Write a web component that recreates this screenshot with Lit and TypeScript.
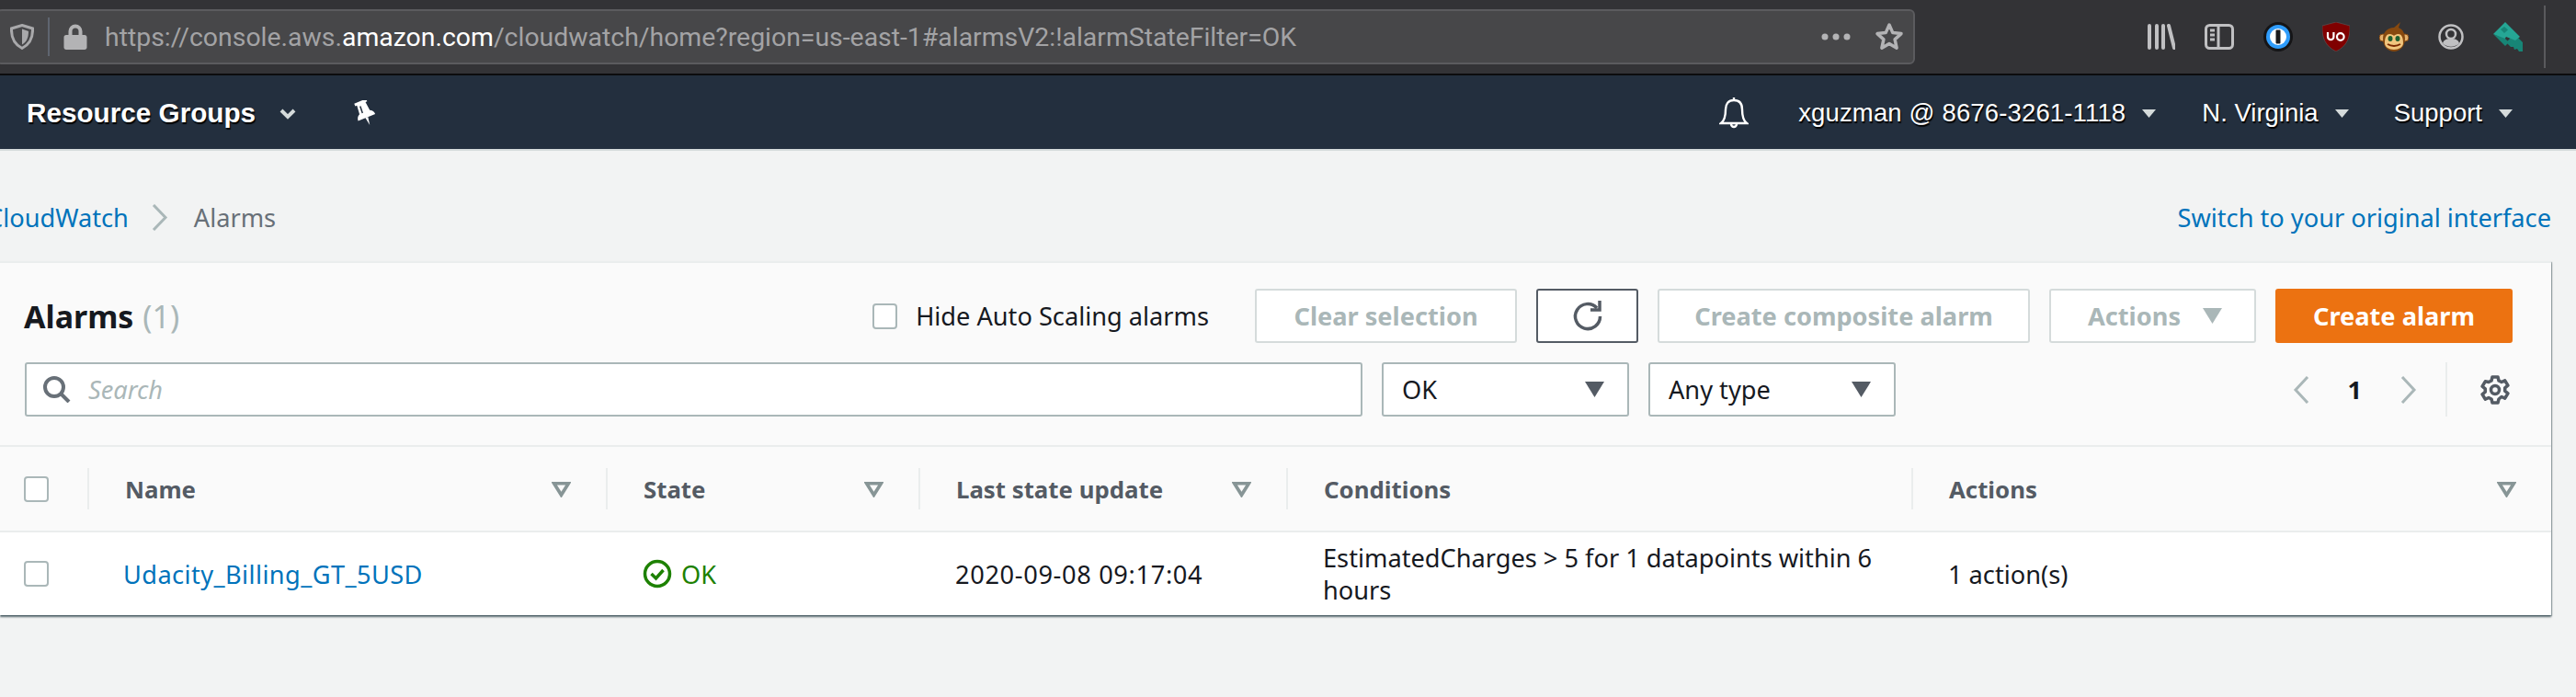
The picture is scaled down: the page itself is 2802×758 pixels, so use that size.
import { LitElement, css, html } from "lit";
import { customElement } from "lit/decorators.js";

const caret = html`<svg class="caret" viewBox="0 0 20 16"><path d="M0 0h20L10 16z" /></svg>`;
const sort = html`<svg class="sort" viewBox="0 0 20 16"><path d="M2.500 1.500h15L10 13.500z" fill="none" stroke="#879596" stroke-width="3.500" /></svg>`;
const mini = html`<svg class="mini" viewBox="0 0 15 9"><path d="M0 0h15L7.500 9z" /></svg>`;

const columns = [
  { name: "Name", sorted: true },
  { name: "State", sorted: true },
  { name: "Last state update", sorted: true },
  { name: "Conditions", sorted: false },
  { name: "Actions", sorted: true },
];

@customElement("app-root")
export class AppRoot extends LitElement {
  static styles = css`
    :host {
      display: block;
      width: 2802px;
      height: 758px;
      overflow: hidden;
      background: #f2f3f3;
      font-family: "Noto Sans", Lato, sans-serif;
      font-size: 27.2px;
      color: #16191f;
    }
    svg {
      display: block;
      flex: none;
    }

    /* browser chrome */
    .chrome {
      height: 80px;
      background: #333336;
      display: flex;
      align-items: center;
      border-bottom: 2px solid #0c0c0d;
    }
    .url {
      width: 2087px;
      height: 60px;
      margin-left: -4px;
      box-sizing: border-box;
      background: #474749;
      border: 2px solid #5b5b5e;
      border-radius: 6px;
      display: flex;
      align-items: center;
      padding-left: 13px;
      font-family: Roboto, sans-serif;
      font-size: 28.4px;
      color: #a3a3a5;
      white-space: nowrap;
    }
    .url b {
      font-weight: 400;
      color: #fff;
    }
    .url .sep {
      width: 2px;
      height: 42px;
      background: #5f6570;
      margin: 0 15px 0 15px;
    }
    .url .addr {
      margin-left: 19px;
      flex: 1;
    }
    .url .dots {
      margin-right: 26px;
    }
    .url .star {
      margin-right: 10px;
    }
    .tools {
      display: flex;
      align-items: center;
      margin-left: 253px;
      gap: 32px;
    }
    .tools .end {
      width: 2px;
      height: 68px;
      background: #5a5a5d;
      margin-left: -9px;
    }

    /* aws nav */
    .nav {
      height: 82px;
      box-sizing: border-box;
      background: #232f3e;
      border-bottom: 2px solid #d5dbdb;
      display: flex;
      align-items: center;
      padding: 2px 69px 0 29px;
      color: #fff;
      font-family: "Liberation Sans", Arial, sans-serif;
      font-size: 27.5px;
      white-space: nowrap;
      text-shadow: 1px 2px 1px #000;
    }
    .nav .groups {
      font-weight: 700;
      font-size: 29.7px;
    }
    .nav .chev {
      margin: 2px 0 0 26px;
    }
    .nav .pin {
      margin-left: 63px;
    }
    .nav .bell {
      margin-left: auto;
    }
    .nav .user {
      margin-left: 54px;
      letter-spacing: 0.15px;
    }
    .nav .region {
      margin-left: 50px;
    }
    .nav .support {
      margin-left: 49px;
    }
    .nav .mini {
      margin-left: 18px;
      width: 15px;
      height: 9px;
      fill: #d5dbdb;
    }

    /* breadcrumb */
    .crumbs {
      height: 96px;
      padding-top: 24px;
      display: flex;
      align-items: center;
      margin-left: -14px;
      width: 2789px;
      white-space: nowrap;
    }
    .crumbs a,
    .link {
      color: #0073bb;
    }
    .crumbs svg {
      margin: 0 28px 0 25px;
    }
    .crumbs span {
      color: #687078;
    }
    .crumbs .switch {
      margin-left: auto;
    }

    /* panel */
    .panel {
      width: 2775px;
      background: #fff;
      box-shadow: 0 2px 2px rgba(0, 28, 36, 0.6), 1px 1px 1px rgba(0, 28, 36, 0.25);
      border-top: 2px solid #eaeded;
    }
    .top {
      background: #fafafa;
      padding: 28px 42px 31px 26px;
      display: flex;
      flex-direction: column;
      gap: 21px;
      border-bottom: 2px solid #eaeded;
    }
    .row {
      height: 59px;
      display: flex;
      align-items: center;
    }
    .title {
      font-size: 34px;
      font-weight: 700;
      white-space: nowrap;
    }
    .title span {
      font-weight: 400;
      color: #aab7b8;
      margin-left: 1px;
    }
    .box {
      width: 27px;
      height: 28px;
      box-sizing: border-box;
      background: #fff;
      border: 2px solid #aab7b8;
      border-radius: 4px;
      flex: none;
    }
    .hide {
      display: flex;
      align-items: center;
      gap: 20px;
      margin-left: auto;
      margin-right: 50px;
      white-space: nowrap;
    }
    .btn {
      height: 59px;
      box-sizing: border-box;
      border: 2px solid #d5dbdb;
      border-radius: 3px;
      background: #fff;
      color: #aab7b8;
      font-weight: 700;
      display: flex;
      align-items: center;
      justify-content: center;
      white-space: nowrap;
      margin-left: 21px;
    }
    .hide + .btn {
      margin-left: 0;
    }
    .clear {
      width: 285px;
    }
    .refresh {
      width: 111px;
      border-color: #545b64;
    }
    .composite {
      width: 405px;
    }
    .actions {
      width: 225px;
      gap: 24px;
      padding-left: 5px;
    }
    .actions .caret {
      fill: #aab7b8;
    }
    .create {
      width: 258px;
      background: #ec7211;
      border-color: #ec7211;
      color: #fff;
    }
    .caret {
      width: 21px;
      height: 17px;
      fill: #545b64;
    }
    .search {
      width: 1455px;
      height: 59px;
      box-sizing: border-box;
      margin-left: 1px;
      background: #fff;
      border: 2px solid #aab7b8;
      border-radius: 3px;
      display: flex;
      align-items: center;
      padding-left: 18px;
      gap: 18px;
      color: #aab7b8;
      font-style: italic;
    }
    .select {
      width: 269px;
      height: 59px;
      box-sizing: border-box;
      background: #fff;
      border: 2px solid #aab7b8;
      border-radius: 3px;
      display: flex;
      align-items: center;
      justify-content: space-between;
      padding: 0 25px 0 20px;
      margin-left: 21px;
    }
    .pager {
      margin-left: auto;
      display: flex;
      align-items: center;
      height: 59px;
    }
    .pager .num {
      margin: 0 42px 0 41px;
      font-weight: 700;
    }
    .pager .rule {
      width: 2px;
      height: 59px;
      background: #eaeded;
      margin: 0 36px 0 31px;
    }
    .pager .gear {
      margin-right: 3px;
    }

    /* table */
    .tr {
      display: grid;
      grid-template-columns: 95px 564px 340px 400px 680px 696px;
      align-items: center;
    }
    .thead {
      height: 91px;
      background: #fafafa;
      border-bottom: 2px solid #eaeded;
      color: #545b64;
      font-weight: 700;
      font-size: 25.8px;
    }
    .th {
      height: 45px;
      box-sizing: border-box;
      border-left: 2px solid #eaeded;
      padding: 0 38px 0 39px;
      display: flex;
      align-items: center;
      justify-content: space-between;
      white-space: nowrap;
    }
    .sort {
      width: 21px;
      height: 17px;
      margin-top: 2px;
    }
    .tbody {
      height: 90px;
      line-height: 35px;
    }
    .cb {
      padding-left: 26px;
    }
    .td {
      padding: 0 38px 0 40px;
    }
    .link {
      margin-left: -1px;
      letter-spacing: 0.42px;
    }
    .stamp {
      letter-spacing: 0.65px;
    }
    .ok {
      display: flex;
      align-items: center;
      gap: 10px;
      color: #1d8102;
    }
  `;

  render() {
    return html`
      <div class="chrome">
        <div class="url">
          <svg width="26" height="28" viewBox="0 0 26 28">
            <path d="M13 1.500 24.500 5c.4 9.500-2.500 17-11.500 21.500C4 22 1.100 14.500 1.500 5z" fill="none" stroke="#a9a9ab" stroke-width="3" />
            <path d="M13 5.500 20 8c0 7-2 11.500-7 14.500z" fill="#a9a9ab" />
          </svg>
          <div class="sep"></div>
          <svg width="26" height="28" viewBox="0 0 26 28">
            <path d="M5.500 12V8a7.500 7.500 0 0 1 15 0v4h2.500c1.500 0 2.500 1 2.500 2.500v11c0 1.500-1 2.500-2.500 2.500H3c-1.500 0-2.500-1-2.500-2.500v-11C.5 13 1.500 12 3 12zm4 0h7V8a3.500 3.500 0 0 0-7 0z" fill="#b3b3b5" />
          </svg>
          <div class="addr">https://console.aws.<b>amazon.com</b>/cloudwatch/home?region=us-east-1#alarmsV2:!alarmStateFilter=OK</div>
          <svg class="dots" width="32" height="8" viewBox="0 0 32 8" fill="#b3b3b5">
            <circle cx="4" cy="4" r="3.500" /><circle cx="16" cy="4" r="3.500" /><circle cx="28" cy="4" r="3.500" />
          </svg>
          <svg class="star" width="32" height="32" viewBox="0 0 32 32">
            <path d="M16 3l3.800 8.600 9.200 1-6.900 6.300 2 9.300-8.100-4.800-8.100 4.800 2-9.300L3 12.600l9.200-1z" fill="none" stroke="#b3b3b5" stroke-width="3.500" stroke-linejoin="round" />
          </svg>
        </div>
        <div class="tools">
          <svg width="30" height="28" viewBox="0 0 30 28" stroke="#c0c0c2" stroke-width="4" stroke-linecap="round">
            <path d="M2 2v24M10 2v24M17 2v24M23 2l6 24" />
          </svg>
          <svg width="32" height="28" viewBox="0 0 32 28" fill="none" stroke="#c0c0c2" stroke-width="3">
            <rect x="1.500" y="1.500" width="29" height="25" rx="4" /><path d="M15 2v24" />
            <path d="M6 7h5M6 12h5M6 17h5" />
          </svg>
          <svg width="32" height="32" viewBox="0 0 32 32">
            <circle cx="16" cy="16" r="16" fill="#151517" /><circle cx="16" cy="16" r="13" fill="#2f9cfb" />
            <circle cx="16" cy="16" r="9" fill="#fff" /><rect x="13.500" y="8.500" width="5" height="15" rx="1" fill="#1a1a1c" />
          </svg>
          <svg width="30" height="32" viewBox="0 0 30 32">
            <path d="M15 0l15 4c.5 13-3 22-15 28C3 26-.5 17 0 4z" fill="#800000" stroke="#5a5a5d" stroke-width=".6" />
            <path d="M6 11v5a3.200 3.200 0 0 0 6.400 0v-5M16 16a3.800 3.800 0 1 0 7.600 0a3.800 3.800 0 1 0-7.600 0" fill="none" stroke="#fff" stroke-width="2.200" />
          </svg>
          <svg width="32" height="32" viewBox="0 0 32 32">
            <circle cx="4" cy="17" r="4" fill="#e3b06c" stroke="#87490f" /><circle cx="28" cy="17" r="4" fill="#e3b06c" stroke="#87490f" />
            <path d="M16 6l7-6-2 6c5 2 7 7 7 12 0 9-6 14-12 14S4 27 4 18C4 11 9 6 16 6z" fill="#87490f" />
            <path d="M6 23c0-7 2-10 5.500-10 2 0 3.500 1 4.500 2 1-1 2.500-2 4.500-2 3.500 0 5.500 3 5.500 10 0 4-4.500 7-10 7S6 27 6 23z" fill="#f1c67e" />
            <ellipse cx="12" cy="18" rx="2.500" ry="3" fill="#1f5f2f" /><ellipse cx="20" cy="18" rx="2.500" ry="3" fill="#1f5f2f" />
            <path d="M9 24c4 2.500 10 2.500 14 0" fill="none" stroke="#7b2a00" stroke-width="2" />
          </svg>
          <svg width="28" height="28" viewBox="0 0 28 28" fill="#c0c0c2">
            <circle cx="14" cy="14" r="12.500" fill="none" stroke="#c0c0c2" stroke-width="2.500" />
            <circle cx="14" cy="11" r="5" fill="none" stroke="#c0c0c2" stroke-width="2.500" />
            <path d="M5 21c1-4 5-5 9-5s8 1 9 5c-5 5-13 5-18 0z" />
          </svg>
          <svg width="32" height="32" viewBox="0 0 32 32">
            <path d="M14 22l9-9 9 9v10h-4l-2-3-3 1-1-3-3 0z" fill="#178576" />
            <path d="M0 13L13 0l16 16-5 4-10-4-2 3z" fill="#25a695" />
            <path d="M0 13l13 13 4-4-4-4z" fill="#178576" />
            <path d="M8 8l4-3 4 3.500-4 3.500z" fill="#178576" />
          </svg>
          <div class="end"></div>
        </div>
      </div>

      <div class="nav">
        <span class="groups">Resource Groups</span>
        <svg class="chev" width="18" height="12" viewBox="0 0 18 12"><path d="M2 2l7 7 7-7" fill="none" stroke="#d5dbdb" stroke-width="4" /></svg>
        <svg class="pin" width="24" height="28" viewBox="0 0 24 28">
          <g transform="rotate(-22 12 14)">
            <path d="M5 0h14v3h-2l1 10c2 1 4 3 4 6H2c0-3 2-5 4-6l1-10H5z" fill="#fff" />
            <path d="M10.500 19h3l-1.500 9z" fill="#fff" />
            <path d="M10 5l-.5 8" stroke="#232f3e" stroke-width="1.500" />
          </g>
        </svg>
        <svg class="bell" width="32" height="34" viewBox="0 0 32 34">
          <path d="M16 3c-6 0-9 4-9 10 0 6-1 12-5 15h28c-4-3-5-9-5-15 0-6-3-10-9-10zM16 0v3M13 29a3 3 0 0 0 6 0" fill="none" stroke="#fff" stroke-width="2.400" />
        </svg>
        <span class="user">xguzman @ 8676-3261-1118</span>
        ${mini}
        <span class="region">N. Virginia</span>
        ${mini}
        <span class="support">Support</span>
        ${mini}
      </div>

      <div class="crumbs">
        <a>CloudWatch</a>
        <svg width="18" height="29" viewBox="0 0 18 29"><path d="M2 1l13 13.500L2 28" fill="none" stroke="#aab7b8" stroke-width="3" /></svg>
        <span>Alarms</span>
        <a class="switch">Switch to your original interface</a>
      </div>

      <div class="panel">
        <div class="top">
          <div class="row">
            <div class="title">Alarms <span>(1)</span></div>
            <label class="hide"><div class="box"></div>Hide Auto Scaling alarms</label>
            <div class="btn clear">Clear selection</div>
            <div class="btn refresh">
              <svg width="34" height="34" viewBox="0 0 34 34">
                <path d="M27 8A13.500 13.500 0 1 0 30.500 17" fill="none" stroke="#545b64" stroke-width="3.500" />
                <path d="M20 10h10V0" fill="none" stroke="#545b64" stroke-width="3.500" />
              </svg>
            </div>
            <div class="btn composite">Create composite alarm</div>
            <div class="btn actions">Actions ${caret}</div>
            <div class="btn create">Create alarm</div>
          </div>
          <div class="row">
            <div class="search">
              <svg width="31" height="29" viewBox="0 0 31 29">
                <circle cx="12" cy="12" r="10" fill="none" stroke="#687078" stroke-width="4" /><path d="M19 19l9 9" stroke="#687078" stroke-width="4" />
              </svg>
              Search
            </div>
            <div class="select">OK ${caret}</div>
            <div class="select">Any type ${caret}</div>
            <div class="pager">
              <svg width="18" height="30" viewBox="0 0 18 30"><path d="M16 1L3 15l13 14" fill="none" stroke="#aab7b8" stroke-width="3" /></svg>
              <span class="num">1</span>
              <svg width="18" height="30" viewBox="0 0 18 30"><path d="M2 1l13 14L2 29" fill="none" stroke="#aab7b8" stroke-width="3" /></svg>
              <div class="rule"></div>
              <svg class="gear" width="32" height="32" viewBox="0 0 32 32" fill="none" stroke="#545b64" stroke-width="3.500">
                <circle cx="16" cy="16" r="4.500" />
                <path d="M13 2h6l1 4 3 1.500 3.700-1.700 3.200 5.400-3.200 2.600v3.400l3.200 2.600-3.200 5.400-3.700-1.700L20 26l-1 4h-6l-1-4-3-1.500-3.700 1.700-3.200-5.400 3.200-2.600v-3.400l-3.200-2.600 3.200-5.400L9 7.500 12 6z" stroke-linejoin="round" />
              </svg>
            </div>
          </div>
        </div>
        <div class="tr thead">
          <div class="cb"><div class="box"></div></div>
          ${columns.map((c) => html`<div class="th"><span>${c.name}</span>${c.sorted ? sort : ""}</div>`)}
        </div>
        <div class="tr tbody">
          <div class="cb"><div class="box"></div></div>
          <div class="td"><a class="link">Udacity_Billing_GT_5USD</a></div>
          <div class="td ok">
            <svg width="32" height="32" viewBox="0 0 32 32" fill="none" stroke="#1d8102" stroke-width="3.500">
              <circle cx="16" cy="16" r="13.500" /><path d="M9.500 16l5 5 8-9" />
            </svg>
            OK
          </div>
          <div class="td stamp">2020-09-08 09:17:04</div>
          <div class="td">EstimatedCharges > 5 for 1 datapoints within 6 hours</div>
          <div class="td">1 action(s)</div>
        </div>
      </div>
    `;
  }
}
